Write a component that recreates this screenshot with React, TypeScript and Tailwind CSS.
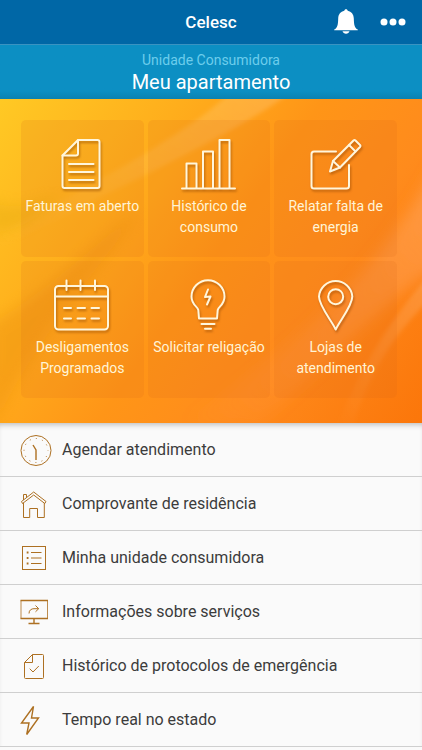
import type { ReactNode } from "react";

interface Item {
  label: string;
  icon: ReactNode;
}

const tiles: Item[] = [
  {
    label: "Faturas em aberto",
    icon: (
      <>
        <path d="M24 2H43.5a2 2 0 0 1 2 2V48a2 2 0 0 1-2 2H10.5a2 2 0 0 1-2-2V17.5Z" />
        <path d="M24 2V15.5a2 2 0 0 1-2 2H8.5" />
        <path d="M15 26H39.5M15 34H39.5M15 42H39.5" />
      </>
    ),
  },
  {
    label: "Histórico de consumo",
    icon: <path d="M1 50.5H54M5.5 50V25.5H15.5V50M22 50V13.5H32V50M38.5 50V2H48.5V50" />,
  },
  {
    label: "Relatar falta de energia",
    icon: (
      <>
        <path d="M28 13.5H6a2.5 2.5 0 0 0-2.5 2.5V48a2.5 2.5 0 0 0 2.5 2.5H38.5a2.5 2.5 0 0 0 2.5-2.5V27" />
        <path d="M22 33.5L25 23L45.5 2.5a1.5 1.5 0 0 1 2 0L52 7a1.5 1.5 0 0 1 0 2L32 29.5Z" />
        <path d="M41 7L47.5 13.5M25 23L32 29.5" />
      </>
    ),
  },
  {
    label: "Desligamentos Programados",
    icon: (
      <>
        <rect x="1" y="7" width="53" height="43.5" rx="3.5" />
        <path d="M1 17.5H54M12.5 1.5V11M26.5 1.5V11M41 1.5V11" />
        <path d="M10 29H17M23.5 29H31M37.5 29H45M10 39.5H17M23.5 39.5H31M37.5 39.5H45" />
      </>
    ),
  },
  {
    label: "Solicitar religação",
    icon: (
      <>
        <path d="M18 39.5L17.3 31C16.5 27.500 10.500 25.500 10.500 17.700A16.500 16.500 0 0 1 43.500 17.700C43.500 25.500 37.500 27.500 36.700 31L36 39.500Z" />
        <path d="M20.5 45H33.5M24 49.7H30" />
        <path d="M27 10.5L24 18L29.5 17.5L26 25.5" />
      </>
    ),
  },
  {
    label: "Lojas de atendimento",
    icon: (
      <>
        <path d="M27.7 50.5C24 42 11 27 11 17.5A16.7 16.7 0 0 1 44.3 17.5C44.3 27 31.5 42 27.7 50.5Z" />
        <circle cx="27.7" cy="17.7" r="7.5" />
      </>
    ),
  },
];

const menu: Item[] = [
  {
    label: "Agendar atendimento",
    icon: (
      <>
        <circle cx="16" cy="16.5" r="15" />
        <path d="M13 11L16 16V26" strokeWidth="1.4" />
        <circle cx="16" cy="16.5" r="12" strokeDasharray="1 5.283" strokeDashoffset="0.5" />
      </>
    ),
  },
  {
    label: "Comprovante de residência",
    icon: (
      <>
        <path d="M1.5 13.5L13.7 4L26 13.5L24.8 15.5L13.7 7L2.5 15.5Z" />
        <path d="M3.5 15V29.5H9.7V20.5H17.5V29.5H24.3V15M3.5 12V6.5H6.5V9.5" />
      </>
    ),
  },
  {
    label: "Minha unidade consumidora",
    icon: (
      <>
        <rect x="2.5" y="4.5" width="23" height="23" />
        <path d="M11 10.5H21.5M11 16H21.5M11 21.5H21.5" />
        <path d="M6.7 10.5H8.5M6.7 16H8.5M6.7 21.5H8.5" strokeWidth="1.8" />
      </>
    ),
  },
  {
    label: "Informações sobre serviços",
    icon: (
      <>
        <path d="M1 4.5V22.5M27.5 4.5V22.5" strokeWidth="0.8" />
        <path d="M0.5 4.5H28M0.5 22.5H28M14 22.5V27.5M8.5 27.5H19.5" strokeWidth="1.4" />
        <path d="M9 17.5C9 14 11.5 12.700 14 12.700H18.500M15.500 9.500L18.700 12.700L15.500 15.800" />
      </>
    ),
  },
  {
    label: "Histórico de protocolos de emergência",
    icon: (
      <>
        <path d="M12.5 4.5H22.5a1 1 0 0 1 1 1V27.5a1 1 0 0 1-1 1H5.5a1 1 0 0 1-1-1V12.5Z" />
        <path d="M12.5 4.5V12.5H4.5M9.7 18.7L13 22L18.8 16" />
      </>
    ),
  },
  {
    label: "Tempo real no estado",
    icon: <path d="M13.5 2.5L1.5 19H9L6.7 30.5L18.5 14H11.5Z" strokeWidth="1.4" />,
  },
];

function BellIcon() {
  return (
    <svg viewBox="0 0 24 26" className="h-[26px] w-6 fill-white" aria-hidden="true">
      <path d="M12 .3c1 0 1.6.6 1.7 1.5 3.700.8 6 3.600 6.100 7.600.2 6.600.7 9.300 4 11.200V21.300H.2v-.7c3.300-1.900 3.800-4.600 4-11.200.1-4 2.400-6.800 6.100-7.600C10.400.9 11 .3 12 .3Z" />
      <path d="M8.5 22.3h7c-.5 1.5-1.8 2.4-3.5 2.4s-3-.9-3.5-2.4Z" />
    </svg>
  );
}

function DotsIcon() {
  return (
    <svg viewBox="0 0 26 8" className="h-2 w-[26px] fill-white" aria-hidden="true">
      <circle cx="4" cy="4" r="3.5" />
      <circle cx="13" cy="4" r="3.5" />
      <circle cx="22" cy="4" r="3.5" />
    </svg>
  );
}

// Light streaks crossing the orange panel
function Streaks() {
  return (
    <svg
      viewBox="0 0 422 324"
      preserveAspectRatio="none"
      className="absolute inset-0 h-full w-full"
      aria-hidden="true"
    >
      <defs>
        <linearGradient id="ray" x1="0" y1="1" x2="1" y2="0">
          <stop offset="0" stopColor="#fff" stopOpacity="0" />
          <stop offset="1" stopColor="#fff" stopOpacity="0.16" />
        </linearGradient>
        <linearGradient id="glow" x1="0" y1="1" x2="1" y2="0">
          <stop offset="0" stopColor="#ff9a50" stopOpacity="0" />
          <stop offset="1" stopColor="#ffa050" stopOpacity="0.75" />
        </linearGradient>
        <filter id="soft" x="-20%" y="-20%" width="140%" height="140%">
          <feGaussianBlur stdDeviation="7" />
        </filter>
        <filter id="edge" x="-20%" y="-20%" width="140%" height="140%">
          <feGaussianBlur stdDeviation="2" />
        </filter>
      </defs>
      <path d="M0 135C100 80 180 40 230 -6H290C220 45 100 95 0 150Z" fill="url(#ray)" filter="url(#edge)" />
      <path d="M-10 100C10 115 40 105 60 95C40 120 20 130 -10 135Z" fill="#e0a810" opacity="0.35" filter="url(#soft)" />
      <path d="M-10 226C50 190 90 150 140 110C100 170 40 230 -10 334Z" fill="#e88a10" opacity="0.35" filter="url(#soft)" />
      <path d="M180 324C270 270 370 190 440 60V165C370 215 320 270 260 324Z" fill="url(#glow)" filter="url(#soft)" />
      <path d="M335 330C360 270 390 220 430 175V200C395 235 370 270 352 330Z" fill="url(#ray)" filter="url(#edge)" />
    </svg>
  );
}

export default function App() {
  return (
    <div className="min-h-screen bg-[#fafafa] font-[Roboto,sans-serif]">
      <header className="grid h-[45px] grid-cols-[1fr_auto_1fr] items-center border-b border-[#3a93c1] bg-[#0067a6] px-4 text-white">
        <h1 className="col-start-2 text-[17px] leading-6 font-medium">Celesc</h1>
        <div className="flex items-center justify-end gap-[22px]">
          <button type="button" aria-label="Notificações">
            <BellIcon />
          </button>
          <button type="button" aria-label="Mais opções">
            <DotsIcon />
          </button>
        </div>
      </header>

      <section className="bg-linear-to-b from-[#0c8fc3] from-85% to-[#0b82b1] py-[5px] text-center">
        <p className="text-sm leading-5 text-[#6ccdec]">Unidade Consumidora</p>
        <p className="text-xl leading-6 text-white">Meu apartamento</p>
      </section>

      <main>
        <section className="relative overflow-hidden bg-linear-[125deg,#ffc924_0%,#ffae1c_28%,#ff9517_50%,#ff8b1c_70%,#fb760a_100%]">
          <Streaks />
          <div className="relative grid grid-cols-3 gap-1 pt-[21px] pr-[25px] pb-[25px] pl-[21px]">
            {tiles.map((tile) => (
              <button
                key={tile.label}
                type="button"
                className="flex h-[137px] flex-col items-center rounded-[5px] bg-[#d8641c]/15 pt-[18px] text-[#fff4d6]"
              >
                <svg
                  viewBox="0 0 56 54"
                  className="h-[54px] w-14 overflow-visible fill-none stroke-[#fff6dc] stroke-2 drop-shadow-[1px_2px_1px_rgba(130,60,0,0.5)]"
                  strokeLinecap="round"
                  strokeLinejoin="round"
                  aria-hidden="true"
                >
                  {tile.icon}
                </svg>
                <span className="mt-1 text-sm leading-[21px]">{tile.label}</span>
              </button>
            ))}
          </div>
        </section>

        <nav className="shadow-[inset_0_5px_6px_-4px_rgba(0,0,0,0.3)]">
          <ul>
            {menu.map((item) => (
              <li key={item.label} className="border-b border-[#cfcfcf]">
                <a href="#" className="flex h-[53px] items-center gap-[10px] pl-5 text-[#3c3c3c]">
                  <svg
                    viewBox="0 0 32 32"
                    className="size-8 shrink-0 fill-none stroke-[#ad7022]"
                    aria-hidden="true"
                  >
                    {item.icon}
                  </svg>
                  <span className="text-base">{item.label}</span>
                </a>
              </li>
            ))}
          </ul>
        </nav>
      </main>
    </div>
  );
}
